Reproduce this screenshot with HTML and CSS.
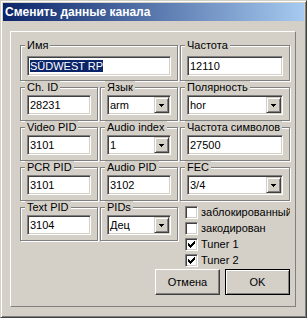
FILE: index.html
```html
<!DOCTYPE html>
<html lang="ru">
<head>
<meta charset="utf-8">
<title>Сменить данные канала</title>
<link rel="stylesheet" href="styles.css">
</head>
<body>
<div class="window">
  <div class="titlebar"><span class="title">Сменить данные канала</span></div>
  <div class="panel">
    <div class="grid">
      <fieldset class="grp r1 span2"><legend>Имя</legend><div class="edit"><span class="sel">SÜDWEST RP</span></div></fieldset>
      <fieldset class="grp r1"><legend>Частота</legend><div class="edit">12110</div></fieldset>

      <fieldset class="grp"><legend>Ch. ID</legend><div class="edit">28231</div></fieldset>
      <fieldset class="grp"><legend>Язык</legend><div class="combo"><span class="val">arm</span><span class="drop"><svg width="5" height="3" viewBox="0 0 5 3" shape-rendering="crispEdges"><rect x="0" y="0" width="5" height="1"/><rect x="1" y="1" width="3" height="1"/><rect x="2" y="2" width="1" height="1"/></svg></span></div></fieldset>
      <fieldset class="grp"><legend>Полярность</legend><div class="combo"><span class="val">hor</span><span class="drop"><svg width="5" height="3" viewBox="0 0 5 3" shape-rendering="crispEdges"><rect x="0" y="0" width="5" height="1"/><rect x="1" y="1" width="3" height="1"/><rect x="2" y="2" width="1" height="1"/></svg></span></div></fieldset>

      <fieldset class="grp"><legend>Video PID</legend><div class="edit">3101</div></fieldset>
      <fieldset class="grp"><legend>Audio index</legend><div class="combo"><span class="val">1</span><span class="drop"><svg width="5" height="3" viewBox="0 0 5 3" shape-rendering="crispEdges"><rect x="0" y="0" width="5" height="1"/><rect x="1" y="1" width="3" height="1"/><rect x="2" y="2" width="1" height="1"/></svg></span></div></fieldset>
      <fieldset class="grp"><legend>Частота символов</legend><div class="edit">27500</div></fieldset>

      <fieldset class="grp"><legend>PCR PID</legend><div class="edit">3101</div></fieldset>
      <fieldset class="grp"><legend>Audio PID</legend><div class="edit">3102</div></fieldset>
      <fieldset class="grp"><legend>FEC</legend><div class="combo"><span class="val">3/4</span><span class="drop"><svg width="5" height="3" viewBox="0 0 5 3" shape-rendering="crispEdges"><rect x="0" y="0" width="5" height="1"/><rect x="1" y="1" width="3" height="1"/><rect x="2" y="2" width="1" height="1"/></svg></span></div></fieldset>

      <fieldset class="grp"><legend>Text PID</legend><div class="edit">3104</div></fieldset>
      <fieldset class="grp"><legend>PIDs</legend><div class="combo"><span class="val">Дец</span><span class="drop"><svg width="5" height="3" viewBox="0 0 5 3" shape-rendering="crispEdges"><rect x="0" y="0" width="5" height="1"/><rect x="1" y="1" width="3" height="1"/><rect x="2" y="2" width="1" height="1"/></svg></span></div></fieldset>
      <div class="checks">
        <div class="chk"><span class="cb"></span><span>заблокированный</span></div>
        <div class="chk"><span class="cb"></span><span>закодирован</span></div>
        <div class="chk"><span class="cb"><svg width="7" height="7" viewBox="0 0 7 7" shape-rendering="crispEdges"><rect x="0" y="2" width="1" height="3"/><rect x="1" y="3" width="1" height="3"/><rect x="2" y="4" width="1" height="3"/><rect x="3" y="3" width="1" height="3"/><rect x="4" y="2" width="1" height="3"/><rect x="5" y="1" width="1" height="3"/><rect x="6" y="0" width="1" height="3"/></svg></span><span>Tuner 1</span></div>
        <div class="chk"><span class="cb"><svg width="7" height="7" viewBox="0 0 7 7" shape-rendering="crispEdges"><rect x="0" y="2" width="1" height="3"/><rect x="1" y="3" width="1" height="3"/><rect x="2" y="4" width="1" height="3"/><rect x="3" y="3" width="1" height="3"/><rect x="4" y="2" width="1" height="3"/><rect x="5" y="1" width="1" height="3"/><rect x="6" y="0" width="1" height="3"/></svg></span><span>Tuner 2</span></div>
      </div>
    </div>
    <div class="buttons">
      <button class="btn">Отмена</button>
      <button class="btn default">OK</button>
    </div>
  </div>
</div>
</body>
</html>
```

FILE: styles.css
```css
html, body {
  margin: 0;
  padding: 0;
  background: #d4d0c8;
  overflow: hidden;
}

.window {
  width: 307px;
  height: 318px;
  box-sizing: border-box;
  background: #d4d0c8;
  border: 1px solid;
  border-color: #d4d0c8 #404040 #404040 #d4d0c8;
  box-shadow: inset 1px 1px 0 #fff, inset -1px -1px 0 #808080;
  padding: 2px;
  display: flex;
  flex-direction: column;
  font-family: "Liberation Sans", Arial, sans-serif;
  font-size: 11px;
  color: #000;
}

.titlebar {
  height: 18px;
  margin-bottom: 1px;
  background: linear-gradient(to right, #0a246a, #a6caf0);
  padding-left: 2px;
  display: flex;
  align-items: center;
}

.title {
  color: #fff;
  font-weight: bold;
  font-size: 12px;
  line-height: 18px;
  white-space: nowrap;
}

.panel {
  flex: 1;
  margin: 9px 8px 8px 7px;
  border: 1px solid;
  border-color: #fff #808080 #808080 #fff;
  padding: 7px 0 0 9px;
  display: flex;
  flex-direction: column;
}

.grid {
  display: grid;
  grid-template-columns: 78px 78px 110px;
  column-gap: 2px;
  align-items: start;
  width: 270px;
}

.grp {
  margin: 0;
  min-width: 0;
  padding: 2px 6px 5px 6px;
  border: 1px solid #808080;
  box-shadow: inset 1px 1px 0 #fff, 1px 1px 0 #fff;
}

.grp.r1 {
  padding-top: 5px;
  padding-bottom: 4px;
}

.span2 {
  grid-column: span 2;
}

.grp legend {
  margin-left: -2px;
  padding: 0 2px;
  line-height: 12px;
  font-size: 11px;
  background: #d4d0c8;
  white-space: nowrap;
}

.edit {
  box-sizing: border-box;
  height: 20px;
  background: #fff;
  border: 1px solid;
  border-color: #808080 #fff #fff #808080;
  box-shadow: inset 1px 1px 0 #404040, inset -1px -1px 0 #d4d0c8;
  padding: 0 2px;
  line-height: 18px;
  white-space: nowrap;
  overflow: hidden;
}

.sel {
  background: #0a246a;
  color: #fff;
}

.combo {
  box-sizing: border-box;
  height: 20px;
  background: #fff;
  border: 1px solid;
  border-color: #808080 #fff #fff #808080;
  box-shadow: inset 1px 1px 0 #404040, inset -1px -1px 0 #d4d0c8;
  padding: 1px;
  display: flex;
}

.combo .val {
  flex: 1;
  padding-left: 1px;
  line-height: 16px;
  white-space: nowrap;
  overflow: hidden;
}

.drop {
  box-sizing: border-box;
  width: 15px;
  height: 16px;
  background: #d4d0c8;
  border: 1px solid;
  border-color: #d4d0c8 #404040 #404040 #d4d0c8;
  box-shadow: inset 1px 1px 0 #fff, inset -1px -1px 0 #808080;
  display: flex;
  align-items: center;
  justify-content: center;
}

.drop svg {
  display: block;
  fill: #000;
}

.checks {
  grid-column: 3;
  padding: 3px 0 0 5px;
  overflow: hidden;
  white-space: nowrap;
}

.chk {
  height: 16px;
  display: flex;
  align-items: center;
  gap: 3px;
}

.cb {
  flex: none;
  box-sizing: border-box;
  width: 13px;
  height: 13px;
  background: #fff;
  border: 1px solid;
  border-color: #808080 #fff #fff #808080;
  box-shadow: inset 1px 1px 0 #404040, inset -1px -1px 0 #d4d0c8;
  display: flex;
  align-items: center;
  justify-content: center;
}

.cb svg {
  display: block;
  fill: #000;
}

.buttons {
  width: 270px;
  margin-top: 1px;
  display: flex;
  justify-content: flex-end;
  gap: 5px;
}

.btn {
  box-sizing: border-box;
  width: 65px;
  height: 26px;
  margin: 0;
  padding: 0;
  background: #d4d0c8;
  border: 1px solid;
  border-color: #fff #404040 #404040 #fff;
  box-shadow: inset -1px -1px 0 #808080, inset 1px 1px 0 #d4d0c8;
  font-family: "Liberation Sans", Arial, sans-serif;
  font-size: 11px;
  color: #000;
}

.btn.default {
  border-color: #000;
  box-shadow: inset 1px 1px 0 #fff, inset -1px -1px 0 #808080;
}
```
